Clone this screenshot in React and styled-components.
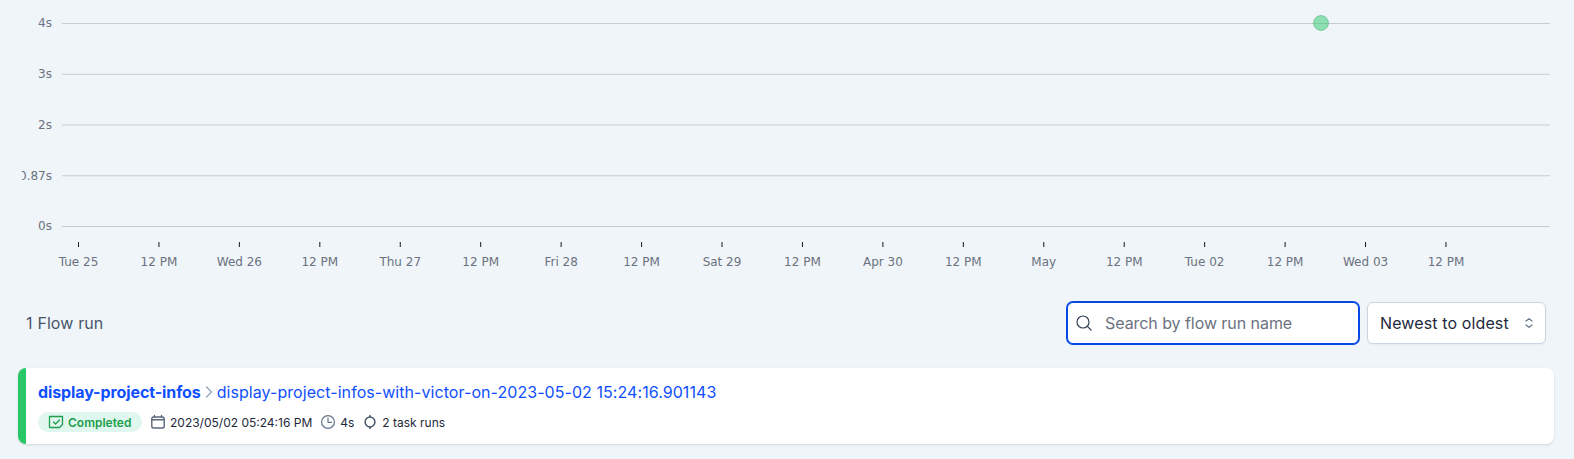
import React from "react";
import styled, { createGlobalStyle } from "styled-components";

const GlobalStyle = createGlobalStyle`
  *, *::before, *::after { box-sizing: border-box; }
  body {
    margin: 0;
    background: #f0f5f9;
    font-family: Inter, "Liberation Sans", sans-serif;
    color: #1e293b;
  }
`;

const Page = styled.main`
  height: 459px;
  overflow: hidden;
  padding: 0 20px 0 18px;
`;

const Chart = styled.svg`
  display: block;
  width: 1530px;
  height: 280px;
  margin-left: 4px;
  font-family: "DejaVu Sans", sans-serif;
  font-size: 12px;
  fill: #6b7280;
`;

const GridLine = styled.line`
  stroke: #c8ccd1;
  stroke-width: 1;
`;

const Tick = styled.line`
  stroke: #111827;
  stroke-width: 1;
`;

const RunDot = styled.circle`
  fill: #2ac769;
  fill-opacity: 0.5;
  stroke: #22a355;
  stroke-opacity: 0.4;
`;

const Toolbar = styled.header`
  display: flex;
  align-items: center;
  height: 42px;
  margin-top: 22px;
  padding: 0 8px;
`;

const Count = styled.span`
  flex: 1;
  font-size: 16px;
  line-height: 24px;
  word-spacing: 0.5px;
  color: #475569;
`;

const SearchBox = styled.label`
  display: flex;
  align-items: center;
  width: 292px;
  height: 42px;
  padding-left: 8px;
  border: 1px solid #0549e5;
  border-radius: 6px;
  background: #fff;
  box-shadow: 0 0 0 1px #0549e5;
  color: #334155;
`;

const SearchInput = styled.input`
  flex: 1;
  min-width: 0;
  height: 100%;
  margin-left: 13px;
  padding: 0;
  border: 0;
  outline: 0;
  background: transparent;
  font: 16px/24px Inter, "Liberation Sans", sans-serif;
  letter-spacing: -0.06px;
  &::placeholder { color: #6b7280; opacity: 1; }
`;

const SortButton = styled.button`
  display: flex;
  align-items: center;
  justify-content: space-between;
  width: 179px;
  height: 42px;
  margin-left: 8px;
  padding: 0 11px 0 12px;
  border: 1px solid #cbd5e1;
  border-radius: 6px;
  background: #fff;
  box-shadow: 0 1px 2px rgba(0, 0, 0, 0.05);
  font: 16px/24px Inter, "Liberation Sans", sans-serif;
  letter-spacing: 0.12px;
  color: #1e293b;
`;

const Card = styled.article`
  height: 76px;
  margin-top: 24px;
  padding: 12px 12px 0;
  border-left: 8px solid #2ac769;
  border-radius: 8px;
  background: #fff;
  box-shadow: 0 1px 3px rgba(0, 0, 0, 0.1), 0 1px 2px -1px rgba(0, 0, 0, 0.1);
`;

const Breadcrumb = styled.div`
  display: flex;
  align-items: center;
  height: 24px;
  font-size: 16px;
  line-height: 24px;
`;

const Crumb = styled.a`
  color: #0f4fff;
  font-weight: ${(p) => (p.$strong ? 700 : 400)};
  letter-spacing: ${(p) => (p.$strong ? "-0.1px" : "0.06px")};
`;

const Details = styled.div`
  display: flex;
  align-items: center;
  gap: 8px;
  height: 20px;
  margin-top: 8px;
  font-size: 12px;
  line-height: 16px;
`;

const Badge = styled.span`
  display: flex;
  align-items: center;
  gap: 4px;
  width: 104px;
  height: 20px;
  padding: 0 10px;
  border-radius: 10px;
  background: #dff7ee;
  color: #219d4b;
  font-weight: 600;
`;

const Detail = styled.span`
  display: flex;
  align-items: center;
  gap: 4px;
`;

const Label = styled.span`
  padding-top: 2px;
`;

const Icon = styled.svg`
  display: block;
  flex: none;
  width: ${(p) => p.$size || 16}px;
  height: ${(p) => p.$size || 16}px;
  fill: none;
  stroke: ${(p) => p.$color || "#475569"};
  stroke-width: ${(p) => p.$weight || 1};
  stroke-linecap: round;
  stroke-linejoin: round;
`;

const durations = [
  ["4s", 23.5, 27],
  ["3s", 74.25, 78],
  ["2s", 125, 129],
  ["0.87s", 175.75, 180],
  ["0s", 226.5, 230],
];

const dates = [
  "Tue 25", "12 PM", "Wed 26", "12 PM", "Thu 27", "12 PM", "Fri 28", "12 PM", "Sat 29",
  "12 PM", "Apr 30", "12 PM", "May", "12 PM", "Tue 02", "12 PM", "Wed 03", "12 PM",
];

function DurationChart() {
  return (
    <Chart viewBox="22 0 1530 280">
      {durations.map(([label, y, baseline]) => (
        <g key={label}>
          <text x="52" y={baseline} textAnchor="end">{label}</text>
          <GridLine x1="62" x2="1550" y1={y} y2={y} />
        </g>
      ))}
      {dates.map((label, i) => {
        const x = 78.5 + i * 80.44;
        return (
          <g key={i}>
            <Tick x1={x} x2={x} y1="242" y2="247" />
            <text x={x} y="266" textAnchor="middle">{label}</text>
          </g>
        );
      })}
      <RunDot cx="1321" cy="23" r="7.5" />
    </Chart>
  );
}

export default function App() {
  return (
    <>
      <GlobalStyle />
      <Page>
        <DurationChart />
        <Toolbar>
          <Count>1 Flow run</Count>
          <SearchBox>
            <Icon $color="#334155" $weight={1.2} viewBox="0 0 16 16">
              <circle cx="7" cy="7" r="6" />
              <path d="M11.4 11.4 15 15" />
            </Icon>
            <SearchInput placeholder="Search by flow run name" />
          </SearchBox>
          <SortButton>
            Newest to oldest
            <Icon $size={10} $color="#64748b" $weight={1.2} viewBox="0 0 10 10">
              <path d="M2 3 5 0.7 8 3M2 7 5 9.3 8 7" />
            </Icon>
          </SortButton>
        </Toolbar>
        <Card>
          <Breadcrumb>
            <Crumb $strong>display-project-infos</Crumb>
            <Icon $color="#94a3b8" $weight={1.3} viewBox="0 0 16 16">
              <path d="M5.5 3 10.5 8 5.5 13" />
            </Icon>
            <Crumb>display-project-infos-with-victor-on-2023-05-02 15:24:16.901143</Crumb>
          </Breadcrumb>
          <Details>
            <Badge>
              <Icon $color="#219d4b" $weight={1.3} viewBox="0 0 16 16">
                <path d="M1.5 2.5h13v8l-3 3h-10z" />
                <path d="m5.5 8 2 2 4-4" />
              </Icon>
              <Label>Completed</Label>
            </Badge>
            <Detail>
              <Icon $color="#5b687b" $weight={1.4} viewBox="0 0 16 16">
                <rect x="1.8" y="3" width="12.4" height="11" rx="1.8" />
                <path d="M1.8 5.8h12.4M4.5 1.5V3M11.5 1.5V3" />
              </Icon>
              <Label>2023/05/02 05:24:16 PM</Label>
            </Detail>
            <Detail>
              <Icon $color="#64748b" $weight={1.2} viewBox="0 0 16 16">
                <circle cx="8" cy="8" r="6.4" />
                <path d="M8 4v4.3h3.5" />
              </Icon>
              <Label>4s</Label>
            </Detail>
            <Detail>
              <Icon $weight={1.5} viewBox="0 0 16 16">
                <circle cx="8" cy="8" r="4.9" />
                <path d="M8 1.4v1.5M8 13.1v1.5" />
              </Icon>
              <Label>2 task runs</Label>
            </Detail>
          </Details>
        </Card>
      </Page>
    </>
  );
}
